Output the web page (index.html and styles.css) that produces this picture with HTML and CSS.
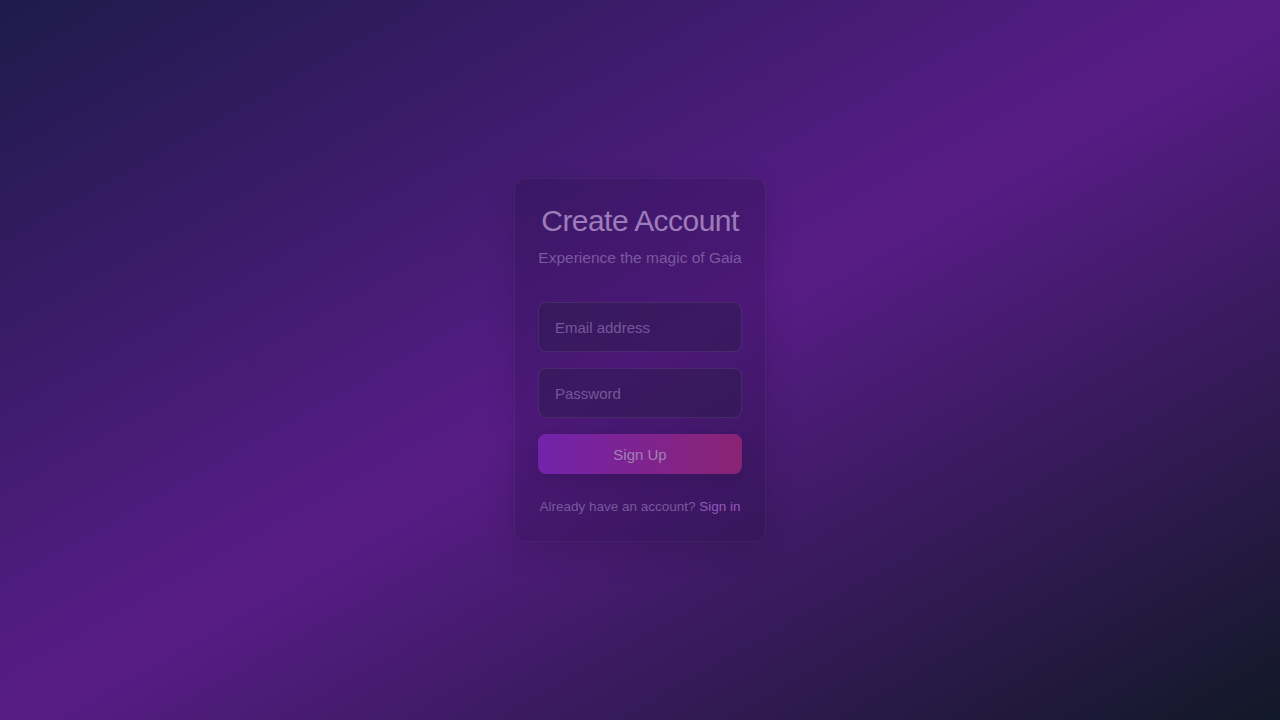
FILE: index.html
```html
<!DOCTYPE html>
<html lang="en">
<head>
<meta charset="utf-8">
<title>Create Account</title>
<link rel="stylesheet" href="styles.css">
</head>
<body>
<main class="page">
  <section class="card">
    <h1 class="title">Create Account</h1>
    <p class="subtitle">Experience the magic of Gaia</p>
    <form class="form">
      <input class="field" type="email" placeholder="Email address">
      <input class="field" type="password" placeholder="Password">
      <button class="btn" type="button">Sign Up</button>
    </form>
    <p class="footer">Already have an account? <a class="link" href="#">Sign in</a></p>
  </section>
</main>
</body>
</html>
```

FILE: styles.css
```css
* { box-sizing: border-box; }
html, body { margin: 0; height: 100%; }
body {
  font-family: "Liberation Sans", Arial, sans-serif;
  background: linear-gradient(to bottom right, #1e1b4b 0%, #581c87 50%, #111827 100%);
  background-attachment: fixed;
}
.page {
  height: 720px;
  display: flex;
  align-items: center;
  justify-content: center;
}
.card {
  width: 252px;
  padding: 24px 23px 25px;
  border-radius: 12px;
  background: rgba(15, 8, 35, 0.16);
  border: 1px solid rgba(255, 255, 255, 0.05);
  box-shadow: 0 10px 30px rgba(0, 0, 0, 0.12);
  text-align: center;
}
.title {
  margin: 0;
  font-size: 30px;
  font-weight: 400;
  line-height: 36px;
  letter-spacing: -0.55px;
  white-space: nowrap;
  color: #9d7cba;
}
.subtitle {
  margin: 8px 0 0;
  font-size: 15.5px;
  line-height: 22px;
  white-space: nowrap;
  color: #7b589f;
}
.form {
  margin-top: 33px;
  display: flex;
  flex-direction: column;
  gap: 16px;
}
.field {
  height: 50px;
  width: 100%;
  padding: 0 16px;
  border-radius: 8px;
  border: 1px solid rgba(255, 255, 255, 0.08);
  background: rgba(38, 28, 70, 0.4);
  font-family: inherit;
  font-size: 15px;
  color: #9b7bb8;
  outline: none;
}
.field::placeholder { color: #76579b; }
.btn {
  height: 40px;
  width: 100%;
  border: 0;
  border-radius: 8px;
  background: linear-gradient(to right, #7223ab 0%, #8a2373 100%);
  font-family: inherit;
  font-size: 15px;
  color: #a082b8;
  box-shadow: 0 6px 14px rgba(0, 0, 0, 0.1);
}
.footer {
  margin: 24px 0 0;
  font-size: 13.5px;
  line-height: 18px;
  white-space: nowrap;
  color: #7a589e;
}
.link {
  color: #9459bd;
  text-decoration: none;
}
```
